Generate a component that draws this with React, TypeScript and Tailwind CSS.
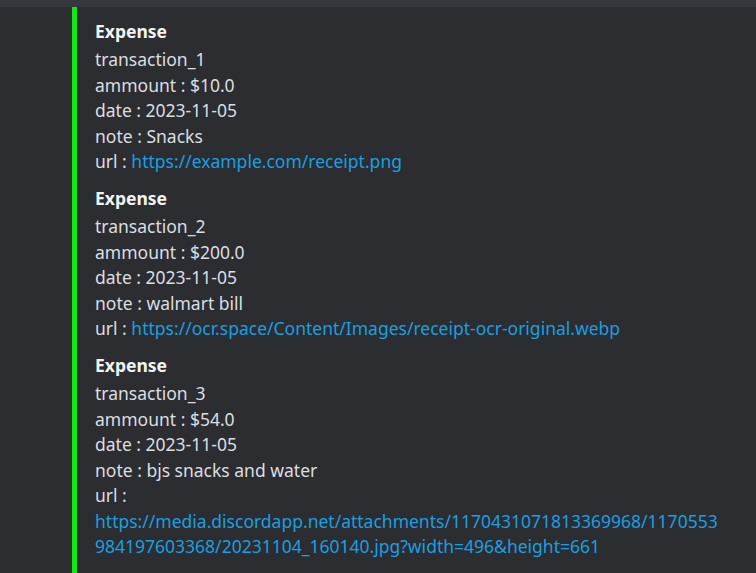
const expenses = [
  { id: 'transaction_1', amount: '$10.0', date: '2023-11-05', note: 'Snacks', url: 'https://example.com/receipt.png' },
  { id: 'transaction_2', amount: '$200.0', date: '2023-11-05', note: 'walmart bill', url: 'https://ocr.space/Content/Images/receipt-ocr-original.webp' },
  {
    id: 'transaction_3',
    amount: '$54.0',
    date: '2023-11-05',
    note: 'bjs snacks and water',
    url: 'https://media.discordapp.net/attachments/1170431071813369968/1170553984197603368/20231104_160140.jpg?width=496&height=661',
  },
]

function ExpenseBlock({ e, long }: { e: (typeof expenses)[number]; long: boolean }) {
  return (
    <div className="text-[17.5px] leading-[25.5px] text-[#dbdee1]">
      <div className="mb-[2.5px] font-bold text-[#f2f3f5]">Expense</div>
      <div>{e.id}</div>
      <div>ammount : {e.amount}</div>
      <div>date : {e.date}</div>
      <div>note : {e.note}</div>
      {long ? (
        <>
          <div>url :</div>
          <div className="break-all text-[#1a9fe0]">{e.url}</div>
        </>
      ) : (
        <div>
          url : <span className="text-[#1a9fe0]">{e.url}</span>
        </div>
      )}
    </div>
  )
}

export default function App() {
  return (
    <div className="h-[573px] w-[756px] overflow-hidden bg-[#2b2d31] font-['Noto_Sans',sans-serif]">
      <div className="h-[7px] bg-[#35373c]" />
      <div className="flex h-[566px]">
        <div className="w-[72px] shrink-0" />
        <div className="w-[5px] shrink-0 bg-[#14e614]" />
        <div className="flex w-[646px] flex-col gap-[11.5px] pl-[18px] pt-[12px]">
          {expenses.map((e, i) => (
            <ExpenseBlock key={e.id} e={e} long={i === 2} />
          ))}
        </div>
      </div>
    </div>
  )
}
